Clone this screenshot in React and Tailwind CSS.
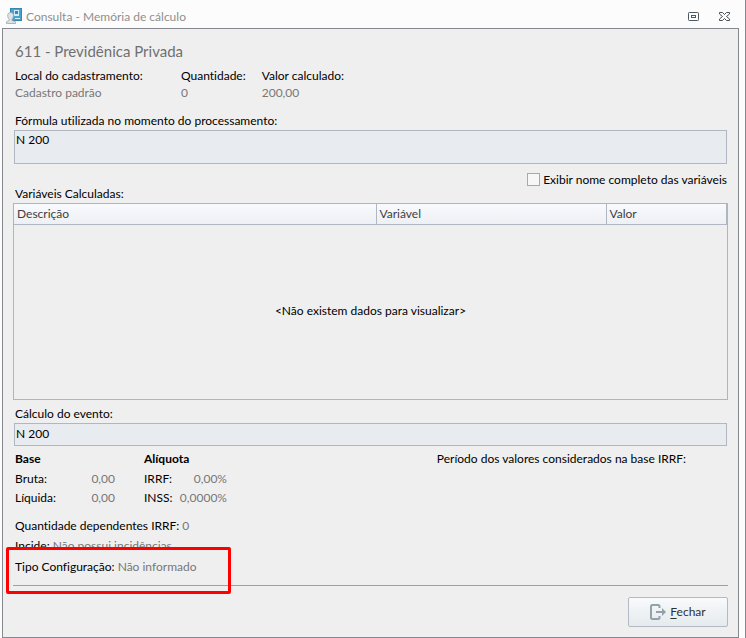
import { useState } from "react";

const columns = [
  { label: "Descrição", width: "w-[362px]" },
  { label: "Variável", width: "w-[230px]" },
  { label: "Valor", width: "" },
];

function IconConsulta() {
  return (
    <svg width="16" height="16" viewBox="0 0 16 16">
      <rect x="4" y="0" width="12" height="13" fill="#2f88b5" />
      <rect x="5" y="1" width="10" height="11" fill="#4ba3cb" />
      <rect x="8" y="2" width="5" height="6" fill="#d3ebf5" />
      <rect x="9" y="3" width="3" height="3" fill="#2f88b5" />
      <rect x="9" y="10" width="5" height="1" fill="#d3ebf5" />
      <path
        d="M.5 15.500v-1.700l2.700-1.400v-1.200C2 10 1.700 8.600 1.700 7.300 1.700 5.500 3 4.500 4.600 4.500s2.900 1 2.900 2.800c0 1.300-.4 2.700-1.500 3.900v1.200l3.500 1.400v1.700z"
        fill="#dfe3e5"
        stroke="#9aa5aa"
        strokeWidth=".8"
      />
    </svg>
  );
}

function IconRestore() {
  return (
    <svg width="11" height="9" viewBox="0 0 11 9" fill="none" stroke="#4c5963">
      <rect x=".5" y=".5" width="10" height="8" rx=".8" />
      <rect x="3.500" y="3.500" width="4" height="2" />
    </svg>
  );
}

function IconClose() {
  return (
    <svg width="11" height="9" viewBox="0 0 11 9" fill="none" stroke="#4a4f55">
      <path d="M.5.5h3l2 2 2-2h3v1.500l-3 2.500 3 2.500v1.500h-3l-2-2-2 2h-3V7l3-2.500-3-2.500z" />
    </svg>
  );
}

function IconExit() {
  return (
    <svg width="16" height="16" viewBox="0 0 16 16" fill="none">
      <path
        d="M9.500 4V2.500a1.500 1.500 0 0 0-1.500-1.500H2.500A1.500 1.500 0 0 0 1 2.500v11A1.500 1.500 0 0 0 2.500 15H8a1.500 1.500 0 0 0 1.500-1.500V12"
        stroke="#93a2aa"
        strokeWidth="2"
      />
      <path d="M6 7h6V4l4 4-4 4V9H6z" fill="#93a2aa" />
    </svg>
  );
}

function Info({ label, value }) {
  return (
    <div>
      <dt>{label}</dt>
      <dd className="text-[#777777]">{value}</dd>
    </div>
  );
}

export default function App() {
  const [fullNames, setFullNames] = useState(false);

  return (
    <main className="flex min-h-screen flex-col border-r border-[#85888f] bg-[#fcfcfc] pr-1.5 pl-0.5 font-[Lato,'Open_Sans',sans-serif] text-[12px] leading-[17px] text-black [font-variant-ligatures:none]">
      <header className="flex h-7 items-center pt-1 pr-[9px] pl-1">
        <IconConsulta />
        <h1 className="ml-1 grow text-[#8f8f8f]">
          Consulta - Memória de cálculo
        </h1>
        <button type="button" aria-label="Restaurar" className="mr-5">
          <IconRestore />
        </button>
        <button type="button" aria-label="Fechar janela">
          <IconClose />
        </button>
      </header>

      <div className="flex grow flex-col border border-[#85888f] bg-[#efefef] px-2.5 pt-3">
        <h2 className="pl-0.5 text-[15px] leading-5 text-[#707070]">
          611 - Previdênica Privada
        </h2>
        <dl className="mt-1.5 flex gap-4 pl-0.5">
          <div className="w-[150px]">
            <Info label="Local do cadastramento:" value="Cadastro padrão" />
          </div>
          <Info label="Quantidade:" value="0" />
          <Info label="Valor calculado:" value="200,00" />
        </dl>

        <label htmlFor="formula" className="mt-[11px] pb-px pl-0.5">
          Fórmula utilizada no momento do processamento:
        </label>
        <textarea
          id="formula"
          readOnly
          defaultValue="N 200"
          className="mx-px h-[34px] resize-none border border-[#b0b7c3] bg-[#e8ebf0] px-px outline-none"
        />

        <label className="mt-[7px] mr-px flex items-center gap-[3px] self-end">
          <input
            type="checkbox"
            checked={fullNames}
            onChange={(e) => setFullNames(e.target.checked)}
            className="size-[13px] appearance-none border border-[#a3a9b5] bg-[#f7f7f8] checked:bg-[#4ba3cb]"
          />
          Exibir nome completo das variáveis
        </label>

        <h3 className="-mt-[3px] pb-px pl-0.5">Variáveis Calculadas:</h3>
        <div className="flex h-[197px] flex-col border border-[#b0b4bf]">
          <table className="w-full table-fixed border-collapse text-left text-[#404040]">
            <thead>
              <tr className="h-5 bg-linear-to-b from-[#f8fafc] to-[#edf0f4]">
                {columns.map((col) => (
                  <th
                    key={col.label}
                    className={`border-r border-b border-[#b0b7c3] px-[3px] font-normal ${col.width}`}
                  >
                    {col.label}
                  </th>
                ))}
              </tr>
            </thead>
          </table>
          <p className="flex grow items-center justify-center pb-0.5">
            &lt;Não existem dados para visualizar&gt;
          </p>
        </div>

        <label htmlFor="calculo" className="mt-[5px] pb-px pl-0.5">
          Cálculo do evento:
        </label>
        <input
          id="calculo"
          readOnly
          defaultValue="N 200"
          className="mx-px h-[23px] border border-[#b0b7c3] bg-[#e8ebf0] px-px pb-0.5 outline-none"
        />

        <div className="mt-1 flex pl-0.5">
          <dl className="grid w-[100px] grid-cols-[auto_1fr] gap-y-0.5">
            <dt className="col-span-2 pb-px font-bold">Base</dt>
            <dt>Bruta:</dt>
            <dd className="text-right text-[#777777]">0,00</dd>
            <dt>Líquida:</dt>
            <dd className="text-right text-[#777777]">0,00</dd>
          </dl>
          <dl className="ml-[29px] grid w-[83px] grid-cols-[auto_1fr] gap-y-0.5">
            <dt className="col-span-2 pb-px font-bold">Alíquota</dt>
            <dt>IRRF:</dt>
            <dd className="text-right text-[#777777]">0,00%</dd>
            <dt>INSS:</dt>
            <dd className="text-right text-[#777777]">0,0000%</dd>
          </dl>
          <p className="mr-[42px] ml-auto">
            Período dos valores considerados na base IRRF:
          </p>
        </div>

        <p className="mt-[11px] pl-0.5">
          Quantidade dependentes IRRF: <span className="text-[#777777]">0</span>
        </p>
        <p className="mt-[3px] pl-0.5">
          Incide: <span className="text-[#777777]">Não possui incidências</span>
        </p>
        <div className="relative -mt-1.5 border-b border-[#a0a0a0] bg-[#efefef] pt-2.5 pb-2.5 pl-0.5">
          Tipo Configuração:{" "}
          <span className="text-[#777777]">Não informado</span>
          <div className="absolute -top-px -bottom-[9px] -left-[7px] w-[225px] rounded-xs border-3 border-[#fe0000]" />
        </div>

        <button
          type="button"
          className="mt-[11px] mb-2.5 flex h-[30px] w-[100px] items-center justify-center gap-1 self-end rounded-xs border border-[#b5b9c3] bg-linear-to-b from-[#f8fafc] to-[#e5eaee] pb-px text-[#303030]"
        >
          <IconExit />
          <span>
            <span className="underline underline-offset-2">F</span>echar
          </span>
        </button>
      </div>
    </main>
  );
}
